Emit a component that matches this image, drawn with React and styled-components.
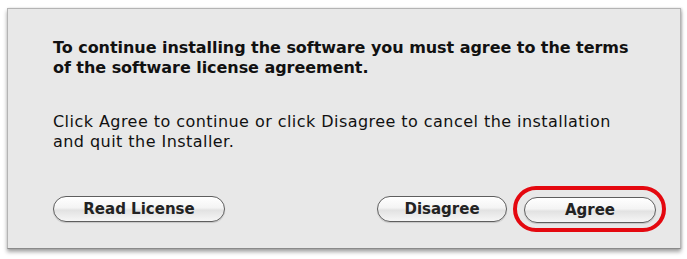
import React from "react";
import styled, { createGlobalStyle } from "styled-components";

const GlobalStyle = createGlobalStyle`
  html, body {
    margin: 0;
    padding: 0;
    background: #ffffff;
  }
  body {
    font-family: "DejaVu Sans", "Liberation Sans", sans-serif;
  }
`;

const Page = styled.div`
  width: 687px;
  height: 259px;
  padding: 8px 6px 0 7px;
  box-sizing: border-box;
`;

const Sheet = styled.div`
  height: 241px;
  box-sizing: border-box;
  background: #e8e8e8;
  border: 1px solid #b4b4b4;
  border-bottom-color: #8a8a8a;
  box-shadow: 0 3px 4px rgba(0, 0, 0, 0.35), 1px 0 2px rgba(0, 0, 0, 0.15);
  padding: 29px 14px 0 45px;
  display: flex;
  flex-direction: column;
`;

const Title = styled.p`
  margin: 0;
  font-size: 16px;
  font-weight: bold;
  letter-spacing: -0.05px;
  line-height: 20px;
  color: #111;
  white-space: nowrap;
`;

const Body = styled.p`
  margin: 34px 0 0;
  font-size: 16px;
  letter-spacing: 0.45px;
  line-height: 20px;
  color: #111;
  white-space: nowrap;
`;

const Actions = styled.div`
  margin-top: 34px;
  display: flex;
  align-items: center;
`;

const Spacer = styled.div`
  flex: 1;
`;

const Pill = styled.button`
  height: 26px;
  width: ${(p) => p.$width}px;
  box-sizing: border-box;
  border-radius: 13px;
  border: 1px solid #5e5e5e;
  background: linear-gradient(
    to bottom,
    #ffffff 0%,
    #f4f4f4 45%,
    #e2e2e2 55%,
    #f6f6f6 100%
  );
  box-shadow: inset 0 1px 1px rgba(255, 255, 255, 0.9),
    0 1px 1px rgba(0, 0, 0, 0.15);
  font-family: "DejaVu Sans", "Liberation Sans", sans-serif;
  font-size: 15px;
  font-weight: bold;
  color: #222;
  padding: 0;
  cursor: default;
`;

const Ring = styled.div`
  margin-left: 6px;
  padding: 7px 6px 5px 7px;
  border: 4px solid #e4080f;
  border-radius: 24px;
  display: flex;
`;

export default function App() {
  return (
    <>
      <GlobalStyle />
      <Page>
        <Sheet>
          <Title>
            To continue installing the software you must agree to the terms
            <br />
            of the software license agreement.
          </Title>
          <Body>
            Click Agree to continue or click Disagree to cancel the installation
            <br />
            and quit the Installer.
          </Body>
          <Actions>
            <Pill $width={172}>Read License</Pill>
            <Spacer />
            <Pill $width={130}>Disagree</Pill>
            <Ring>
              <Pill $width={132}>Agree</Pill>
            </Ring>
          </Actions>
        </Sheet>
      </Page>
    </>
  );
}
